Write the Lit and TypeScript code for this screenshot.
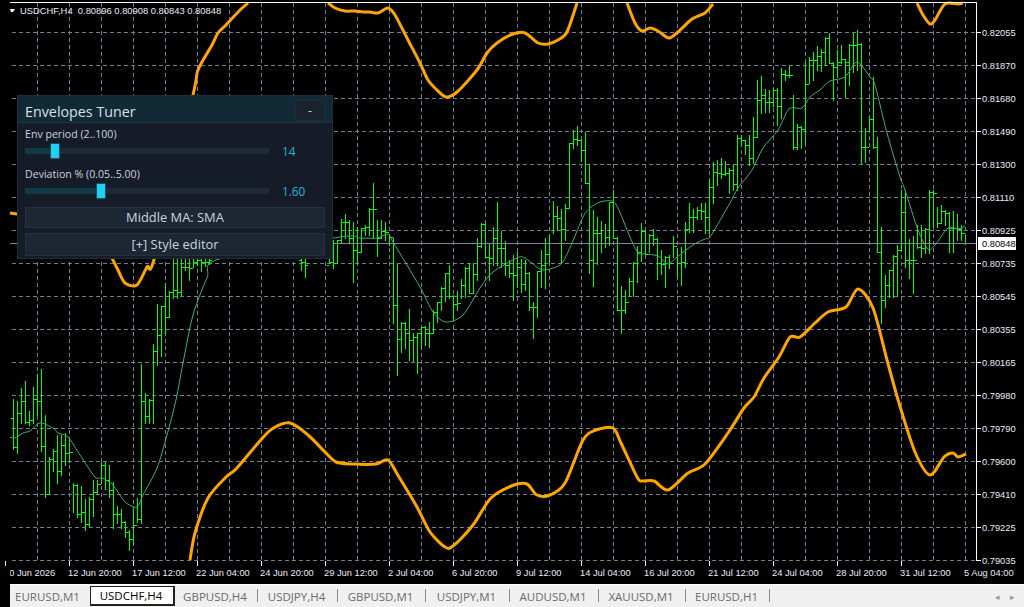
import { LitElement, html, css, svg } from 'lit';
import { customElement } from 'lit/decorators.js';

// [x, high, low, close] in chart pixels, open is the previous close
const BARS: number[][] = [
  [13,399,449,447],[17,401,453,413],[21,388,423,401],[25,381,423,422],[29,411,425,420],[33,387,423,399],
  [37,374,415,401],[41,369,451,446],[45,415,497,494],[49,457,494,459],[53,449,471,451],[57,435,483,471],
  [61,435,475,445],[65,433,465,453],[69,440,462,452],[73,483,512,485],[77,484,517,514],[81,486,522,512],
  [85,499,530,524],[89,497,526,499],[93,480,516,492],[97,480,493,484],[101,462,483,465],[105,462,489,480],
  [109,465,497,490],[113,482,528,514],[117,506,523,514],[121,509,528,522],[125,521,537,532],[129,530,550,539],
  [133,507,544,525],[137,498,522,519],[141,364,523,401],[145,393,423,416],[149,399,423,400],[153,344,423,351],
  [157,304,365,335],[161,306,356,306],[165,283,334,317],[169,291,317,292],[173,240,298,290],[177,240,298,292],
  [181,240,295,267],[185,240,270,267],[189,240,280,268],[193,240,267,262],[197,240,265,260],[201,240,271,262],
  [205,240,266,262],[209,240,264,260],[301,240,270,262],[305,240,277,265],[329,240,263,262],[333,240,268,263],
  [337,240,263,240],[341,219,243,222],[345,214,238,222],[349,220,243,238],[353,222,282,250],[357,227,263,252],
  [361,228,252,228],[365,225,235,227],[369,208,235,209],[373,183,237,209],[377,220,256,238],[381,220,238,231],
  [385,222,240,232],[389,235,245,237],[393,238,323,305],[397,263,375,339],[401,322,352,323],[405,322,348,333],
  [409,309,360,340],[413,333,361,337],[417,333,373,333],[421,327,348,327],[425,326,345,333],[429,322,347,333],
  [433,310,333,312],[437,302,322,302],[441,287,310,288],[445,273,301,273],[449,265,298,296],[453,295,318,304],
  [457,291,310,303],[461,279,298,285],[465,267,297,268],[469,263,293,293],[473,263,293,274],[477,238,280,246],
  [481,223,247,224],[485,223,257,257],[489,244,280,258],[493,227,265,238],[497,202,265,248],[501,231,267,248],
  [505,241,275,265],[509,260,277,273],[513,255,300,275],[517,252,287,267],[521,259,292,284],[525,260,290,273],
  [529,272,310,307],[533,302,338,307],[537,271,317,271],[541,250,287,265],[545,238,288,254],[549,235,263,243],
  [553,201,233,216],[557,206,230,218],[561,209,262,229],[565,204,240,208],[569,143,208,143],[573,130,148,139],
  [577,126,145,140],[581,139,161,150],[585,132,183,183],[589,164,273,260],[593,210,286,233],[597,217,264,233],
  [601,221,252,243],[605,224,247,237],[609,202,245,202],[613,190,238,238],[617,237,310,310],[621,286,333,310],
  [625,290,313,302],[629,278,296,281],[633,262,296,263],[637,246,282,252],[641,223,261,231],[645,231,254,254],
  [649,234,252,235],[653,229,245,239],[657,238,279,263],[661,250,274,264],[665,256,287,257],[669,255,268,263],
  [673,236,257,246],[677,248,277,263],[681,247,285,262],[685,222,267,229],[689,203,232,217],[693,209,232,217],
  [697,207,219,210],[701,203,219,211],[705,203,233,217],[709,180,233,187],[713,162,203,172],[717,160,185,173],
  [721,158,178,174],[725,161,175,173],[729,168,193,170],[733,164,190,184],[737,135,190,138],[741,135,145,140],
  [745,140,154,145],[749,135,165,158],[753,117,163,137],[757,80,137,100],[761,76,113,95],[765,89,112,102],
  [769,90,112,102],[773,88,106,90],[777,88,125,106],[781,68,118,74],[785,70,80,75],[789,66,77,75],
  [793,95,149,147],[797,124,149,127],[801,126,148,129],[805,62,142,84],[809,57,83,60],[813,52,80,60],
  [817,46,70,56],[821,49,71,52],[825,37,65,38],[829,33,63,63],[833,62,100,67],[837,50,77,62],
  [841,45,63,59],[845,59,97,62],[849,44,85,45],[853,33,72,45],[857,30,70,44],[861,43,163,147],
  [865,128,162,147],[869,117,132,119],[873,77,148,147],[877,137,252,252],[881,227,323,300],[885,275,307,285],
  [889,270,297,270],[893,255,297,256],[897,245,296,250],[901,190,250,212],[905,190,267,260],[909,239,278,260],
  [913,236,293,260],[917,225,248,247],[921,225,257,248],[925,228,253,229],[929,190,253,192],[933,190,227,193],
  [937,207,227,223],[941,205,223,211],[945,210,225,213],[949,212,252,228],[953,211,252,228],[957,214,240,229],
  [961,225,240,233],[965,235,244,243],
];

const MA = '10,437 15,438 23,433 30,431 40,423 53,428 58,433 68,437 80,455 95,477 102,478 113,485 125,502 137,507 143,495 157,468 167,435 176,400 183,363 193,315 207,278 219,259 340,237 360,238 377,238 388,234 393,242 420,287 433,312 446,322 463,315 480,288 493,272 517,258 525,258 540,269 550,269 562,263 572,243 583,217 590,208 600,202 612,201 618,208 630,237 638,253 645,254 658,256 668,264 677,257 693,245 705,239 710,237 722,217 730,203 738,188 752,170 763,148 778,130 789,109 802,108 810,97 820,90 830,81 845,77 857,62 870,77 875,85 887,133 900,177 905,190 918,230 928,249 935,245 948,228 958,229 965,226';

const ORANGE = [
  '10,213 17,214',
  '112,258 118,270 125,283 137,285 147,267 155,256 193,95 198,70 212,45 218,33 226,25 240,10 248,3',
  '328,3 335,8 345,11 355,11 363,12 370,12 378,13 388,8 395,15 408,40 420,63 428,80 437,90 446,97 457,92 477,70 487,53 497,43 513,34 525,33 538,43 548,44 558,40 567,32 577,3',
  '627,3 635,23 642,31 650,28 658,31 669,38 678,32 692,19 705,13 713,4',
  '917,3 923,15 930,24 935,20 945,4 958,4 963,3',
  '190,560 195,533 208,498 226,477 236,469 259,442 272,429 290,423 308,435 325,452 336,462 353,464 376,464 388,460 399,477 417,507 430,532 445,547 453,546 473,525 491,498 514,485 527,484 537,495 550,495 565,483 583,440 596,430 613,428 621,443 637,477 642,481 654,481 668,490 688,473 705,464 728,433 744,408 754,397 764,378 779,357 790,337 800,337 815,323 828,312 846,307 858,289 873,308 887,360 899,403 915,452 930,475 944,457 953,453 958,457 966,454',
];

const PRICES = ['0.82055','0.81870','0.81680','0.81490','0.81300','0.81110','0.80925','0.80735','0.80545','0.80355','0.80165','0.79980','0.79790','0.79600','0.79410','0.79225','0.79035'];
const DATES = ['10 Jun 2026','12 Jun 20:00','17 Jun 12:00','22 Jun 04:00','24 Jun 20:00','29 Jun 12:00','2 Jul 04:00','6 Jul 20:00','9 Jul 12:00','14 Jul 04:00','16 Jul 20:00','21 Jul 12:00','24 Jul 04:00','28 Jul 20:00','31 Jul 12:00','5 Aug 04:00'];
const TABS: [string, number][] = [['EURUSD,M1',80],['USDCHF,H4',85],['GBPUSD,H4',83],['USDJPY,H4',80],['GBPUSD,M1',88],['USDJPY,M1',84],['AUDUSD,M1',89],['XAUUSD,M1',87],['EURUSD,H1',84]];

// turn "x,y x,y" into a smooth path, the lines were read off by hand
function smooth(points: string) {
  const p = points.split(' ').map((s) => s.split(',').map(Number));
  let d = `M${p[0][0]} ${p[0][1]}`;
  for (let i = 0; i < p.length - 1; i++) {
    const a = p[Math.max(i - 1, 0)];
    const b = p[i];
    const c = p[i + 1];
    const e = p[Math.min(i + 2, p.length - 1)];
    const c1x = b[0] + (c[0] - a[0]) / 7;
    const c1y = b[1] + (c[1] - a[1]) / 7;
    const c2x = c[0] - (e[0] - b[0]) / 7;
    const c2y = c[1] - (e[1] - b[1]) / 7;
    d += `C${c1x} ${c1y} ${c2x} ${c2y} ${c[0]} ${c[1]}`;
  }
  return d;
}

@customElement('app-root')
export class AppRoot extends LitElement {
  static styles = css`
    :host {
      display: block;
      width: 1024px;
      height: 607px;
      background: #000;
      overflow: hidden;
    }
    .chart {
      position: relative;
      height: 584px;
    }
    .chart svg {
      display: block;
    }
    .grid {
      stroke: #708090;
      stroke-width: 1;
      stroke-dasharray: 4 3;
      fill: none;
    }
    .bars {
      fill: #00ff00;
      shape-rendering: crispEdges;
    }
    .ma {
      stroke: #3cb371;
      stroke-width: 1;
      fill: none;
    }
    .env {
      stroke: #ffa500;
      stroke-width: 3;
      fill: none;
      stroke-linejoin: round;
    }
    .axis {
      stroke: #fff;
      stroke-width: 1;
      fill: none;
    }
    .last {
      stroke: #778899;
      stroke-width: 1;
    }
    .lbl {
      fill: #e6eefa;
      font: 9.3px "Liberation Sans", sans-serif;
    }
    .status {
      fill: #e6eefa;
      font: 9.4px "Liberation Sans", sans-serif;
    }
    .lastlbl {
      fill: #000;
      font: 9.3px "Liberation Sans", sans-serif;
    }

    .panel {
      position: absolute;
      left: 17px;
      top: 95px;
      width: 316px;
      height: 164px;
      box-sizing: border-box;
      background: #151c28;
      border: 1px solid #1c2f3c;
      font-family: "Open Sans", sans-serif;
      color: #c9d4de;
    }
    .head {
      display: flex;
      align-items: center;
      justify-content: space-between;
      height: 27px;
      padding: 3px 7px 0 7px;
      box-sizing: border-box;
      background: #122a35;
      border-bottom: 1px solid #1b3642;
    }
    .title {
      font-size: 14.3px;
      color: #d5e0e8;
      margin-top: 1px;
    }
    .min {
      width: 30px;
      height: 21px;
      display: flex;
      align-items: center;
      justify-content: center;
      box-sizing: border-box;
      background: #18232e;
      border: 1px solid #1e2e3a;
      font-size: 12px;
    }
    .body {
      display: flex;
      flex-direction: column;
      padding: 4px 7px 0 7px;
    }
    .field {
      height: 40px;
    }
    .field label {
      display: block;
      font-size: 10.6px;
      line-height: 14px;
    }
    .row {
      display: flex;
      align-items: center;
      gap: 13px;
      height: 20px;
    }
    .track {
      position: relative;
      width: 244px;
      height: 6px;
      background: #1e2a35;
    }
    .fill {
      height: 100%;
      background: #123a44;
    }
    .thumb {
      position: absolute;
      top: -5px;
      width: 10px;
      height: 16px;
      box-sizing: border-box;
      background: #1fd0f0;
      border: 1px solid #14505f;
      border-radius: 1px;
    }
    .val {
      font-size: 11.8px;
      color: #1fb6dc;
    }
    .btn {
      height: 21px;
      display: flex;
      align-items: center;
      justify-content: center;
      box-sizing: border-box;
      padding-bottom: 2px;
      background: #1c2733;
      border: 1px solid #233341;
      border-radius: 1px;
      font-size: 12.9px;
    }
    .btn + .btn {
      margin-top: 5px;
      height: 23px;
    }

    .tabs {
      display: flex;
      align-items: stretch;
      position: relative;
      margin-left: 10px;
      height: 22px;
      border-top: 1px solid #fff;
      background: #f0f0f0;
      font: 11.5px "Open Sans", sans-serif;
      color: #6b6b6b;
    }
    .tab {
      display: flex;
      align-items: center;
      justify-content: center;
      box-sizing: border-box;
      position: relative;
      padding-right: 5px;
    }
    .tab.sep {
      padding-right: 3px;
    }
    .tab.sep::after {
      content: '';
      position: absolute;
      right: 0;
      top: 4px;
      height: 13px;
      width: 1px;
      background: #8a8a8a;
    }
    .tab.active {
      background: #fff;
      color: #000;
      border: 1px solid #222;
      border-bottom-width: 2px;
      border-right-width: 2px;
      margin-top: 1px;
      margin-bottom: 1px;
      padding-right: 2px;
    }
    .arrows {
      margin-left: auto;
      display: flex;
      align-items: center;
      gap: 10px;
      padding-right: 9px;
      font-size: 9px;
      color: #9a9a9a;
    }
  `;

  private barPath() {
    let d = '';
    let prev = 418;
    for (const [x, h, l, c] of BARS) {
      d += `M${x} ${h}h1V${l + 1}h-1z`;
      d += `M${x - 2} ${prev}h2v1h-2z`;
      d += `M${x + 1} ${c}h2v1h-2z`;
      prev = c;
    }
    return d;
  }

  private gridPath() {
    let d = '';
    for (let i = 0; i < PRICES.length; i++) d += `M12 ${32.5 + i * 33}H976`;
    for (let x = 37; x < 976; x += 32) d += `M${x + 0.5} 3V561`;
    return d;
  }

  private chart() {
    const ticks = PRICES.map((_, i) => `M977 ${32.5 + i * 33}H981`).join('');
    const dateTicks = DATES.slice(0, 15).map((_, i) => `M${69.5 + (i - 1) * 64} 561V566`).join('');
    return svg`
      <path class="grid" d=${this.gridPath()} />
      <path class="bars" d=${this.barPath()} />
      <path class="ma" d=${smooth(MA)} />
      ${ORANGE.map((p) => svg`<path class="env" d=${smooth(p)} />`)}
      <path class="last" shape-rendering="crispEdges" d="M10 243.5H977" />
      <path class="axis" shape-rendering="crispEdges" d="M10 2.5H976.5V561${ticks}" />
      <path class="axis" shape-rendering="crispEdges" d=${dateTicks} />
      <polygon points="10,9 15,9 13,12 11,12" fill="#fff" />
      <text class="status" x="20" y="13.5" xml:space="preserve">USDCHF,H4  0.80896 0.80908 0.80843 0.80848</text>
      ${PRICES.map((p, i) => svg`<text class="lbl" x="982" y=${36 + i * 33}>${p}</text>`)}
      <rect x="978" y="237" width="38" height="13" fill="#fff" />
      <text class="lastlbl" x="982" y="247">0.80848</text>
      <svg x="10" y="560" width="1014" height="24">
        ${DATES.map((t, i) => svg`<text class="lbl" x=${(i - 1) * 64 + 58} y="16">${t}</text>`)}
      </svg>
    `;
  }

  render() {
    return html`
      <div class="chart">
        <svg width="1024" height="584" viewBox="0 0 1024 584">${this.chart()}</svg>
        <div class="panel">
          <div class="head">
            <span class="title">Envelopes Tuner</span>
            <div class="min">-</div>
          </div>
          <div class="body">
            ${this.field('Env period (2..100)', '14', 30)}
            ${this.field('Deviation % (0.05..5.00)', '1.60', 76)}
            <div class="btn">Middle MA: SMA</div>
            <div class="btn">[+] Style editor</div>
          </div>
        </div>
      </div>
      <div class="tabs">
        ${TABS.map(([t, w], i) => html`<div
          class="tab ${i === 1 ? 'active' : i > 1 ? 'sep' : ''}"
          style="width:${w}px"
        >${t}</div>`)}
        <div class="arrows"><span>◂</span><span>▸</span></div>
      </div>
    `;
  }

  private field(name: string, value: string, pos: number) {
    return html`
      <div class="field">
        <label>${name}</label>
        <div class="row">
          <div class="track">
            <div class="fill" style="width:${pos}px"></div>
            <div class="thumb" style="left:${pos - 5}px"></div>
          </div>
          <span class="val">${value}</span>
        </div>
      </div>
    `;
  }
}
